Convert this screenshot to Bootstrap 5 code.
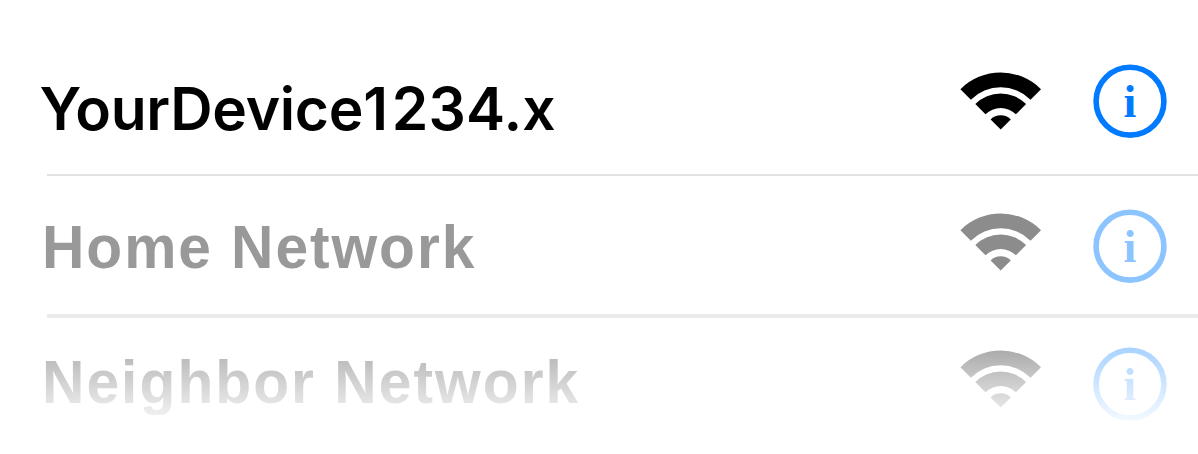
<!DOCTYPE html>
<html lang="en">
<head>
<meta charset="utf-8">
<meta name="viewport" content="width=device-width, initial-scale=1">
<title>Wi-Fi networks</title>
<link href="https://cdn.jsdelivr.net/npm/bootstrap@5.3.0/dist/css/bootstrap.min.css" rel="stylesheet">
<style>
  body { background: #fff; height: 454px; }
  .wifi-list { height: 454px; }
  .net { margin-left: 47px; padding-right: 30.5px; border: 0 solid; box-sizing: border-box; }
  .net-current { height: 176px; padding-top: 64px; border-bottom: 2px solid #e2e2e2; color: #000; }
  .net-home { height: 142px; padding-top: 33.3px; border-bottom: 4px solid #ebebed; color: #999; }
  .net-neighbor { height: 136px; margin-left: 0; padding-left: 47px; padding-top: 29.3px; color: #999;
    -webkit-mask-image: linear-gradient(#000 2px, transparent 114px); mask-image: linear-gradient(#000 2px, transparent 114px); }
  .ssid { font: 700 58.7px/60px "Liberation Sans", Arial, sans-serif; letter-spacing: 1.95px; margin-left: -5px; transform: scaleY(1.03); }
  .net-current .ssid { font: 600 58.7px/60px Inter, sans-serif; letter-spacing: -.3px; margin-left: -7.5px; transform: none; margin-top: 15px; }
  .digit-one { letter-spacing: 3.8px; }
  .digits { letter-spacing: .2px; }
  .net-home .ssid { margin-top: 7.5px; }
  .net-neighbor .ssid { margin-top: 4.5px; letter-spacing: 2.05px; }
  .signal { width: 82px; height: 58px; margin-right: 51px; fill: #8c8c8c; }
  .net-current .signal { fill: #000; margin-top: 8px; }
  .net-home .signal { margin-top: 3.7px; }
  .net-neighbor .signal { margin-top: 2.5px; }
  .info { width: 75px; height: 75px; color: #8cc4ff; }
  .net-current .info { color: #007aff; }
  .info text { font: 700 46px "Liberation Serif", serif; }
</style>
</head>
<body class="overflow-hidden">
<svg class="d-none" xmlns="http://www.w3.org/2000/svg">
  <symbol id="wifi" viewBox="0 0 82 58">
    <path d="M.4 17.2A57 57 0 0 1 81 17.2L70.54 27.66A42.2 42.2 0 0 0 10.86 27.66Z"/>
    <path d="M15.3 32.1A36 36 0 0 1 66.1 32.1L55.9 42.3A21.5 21.5 0 0 0 25.5 42.3Z"/>
    <path d="M30.6 47.4A14.4 14.4 0 0 1 50.8 47.4L40.7 57.5Z"/>
  </symbol>
</svg>
<main class="wifi-list d-flex flex-column">
  <div class="net net-current d-flex align-items-start">
    <div class="ssid text-nowrap me-auto">YourDevice<span class="digit-one">1</span><span class="digits">234.</span>x</div>
    <svg class="signal flex-shrink-0"><use href="#wifi"/></svg>
    <svg class="info flex-shrink-0" viewBox="0 0 75 75"><circle cx="37" cy="37.2" r="33.9" fill="none" stroke="currentColor" stroke-width="5.6"/><text x="36.8" y="53" text-anchor="middle" fill="currentColor">i</text></svg>
  </div>
  <div class="net net-home d-flex align-items-start">
    <div class="ssid text-nowrap me-auto">Home Network</div>
    <svg class="signal flex-shrink-0"><use href="#wifi"/></svg>
    <svg class="info flex-shrink-0" viewBox="0 0 75 75"><circle cx="37" cy="37.2" r="33.9" fill="none" stroke="currentColor" stroke-width="5.6"/><text x="36.8" y="53" text-anchor="middle" fill="currentColor">i</text></svg>
  </div>
  <div class="net net-neighbor d-flex align-items-start">
    <div class="ssid text-nowrap me-auto">Neighbor Network</div>
    <svg class="signal flex-shrink-0"><use href="#wifi"/></svg>
    <svg class="info flex-shrink-0" viewBox="0 0 75 75"><circle cx="37" cy="37.2" r="33.9" fill="none" stroke="currentColor" stroke-width="5.6"/><text x="36.8" y="53" text-anchor="middle" fill="currentColor">i</text></svg>
  </div>
</main>
<script src="https://cdn.jsdelivr.net/npm/bootstrap@5.3.0/dist/js/bootstrap.bundle.min.js"></script>
</body>
</html>
